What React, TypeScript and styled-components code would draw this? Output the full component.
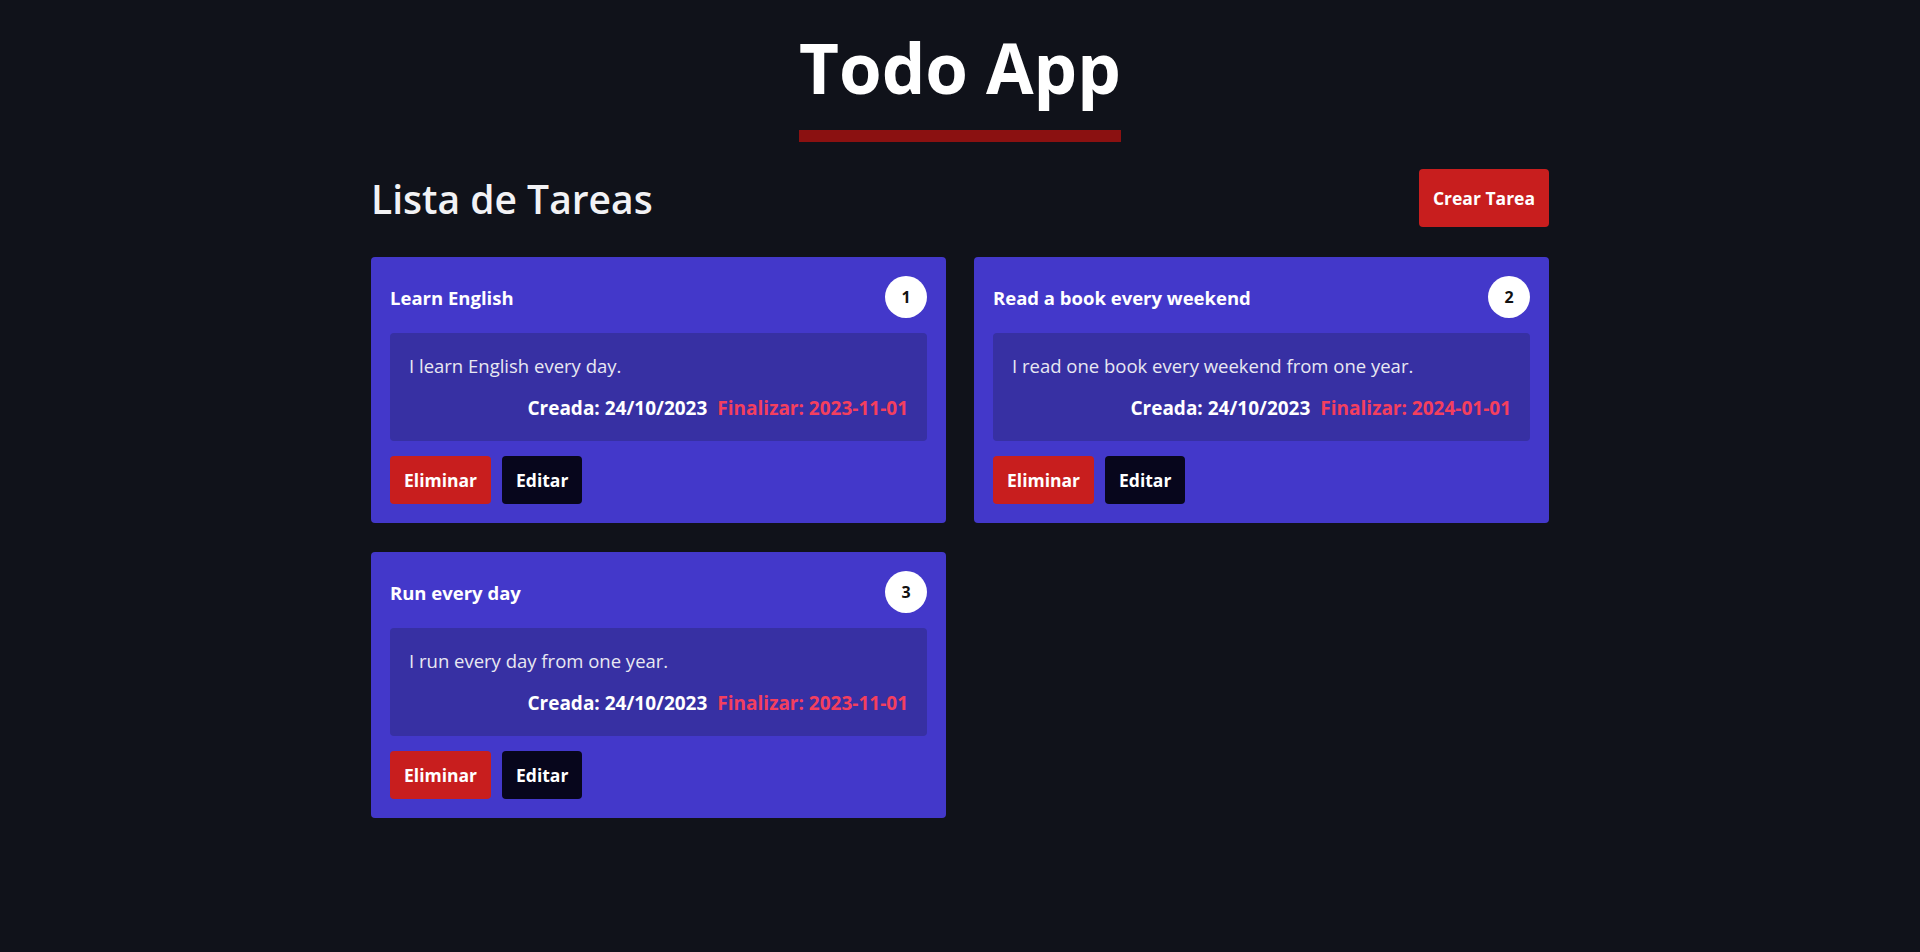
import styled, { createGlobalStyle } from "styled-components";

type Task = {
  id: number;
  title: string;
  description: string;
  created: string;
  due: string;
};

const TASKS: Task[] = [
  {
    id: 1,
    title: "Learn English",
    description: "I learn English every day.",
    created: "24/10/2023",
    due: "2023-11-01",
  },
  {
    id: 2,
    title: "Read a book every weekend",
    description: "I read one book every weekend from one year.",
    created: "24/10/2023",
    due: "2024-01-01",
  },
  {
    id: 3,
    title: "Run every day",
    description: "I run every day from one year.",
    created: "24/10/2023",
    due: "2023-11-01",
  },
];

const GlobalStyle = createGlobalStyle`
  * { box-sizing: border-box; }
  body {
    margin: 0;
    background-color: #10121a;
    font-family: "Open Sans", "Noto Sans", sans-serif;
    color: #ffffff;
  }
`;

const TaskCard = ({ task }: { task: Task }) => (
  <Card>
    <CardHeader>
      <CardTitle>{task.title}</CardTitle>
      <Badge>{task.id}</Badge>
    </CardHeader>
    <CardBody>
      <Description>{task.description}</Description>
      <Dates>
        <span>Creada: {task.created}</span>
        <DueDate>Finalizar: {task.due}</DueDate>
      </Dates>
    </CardBody>
    <Actions>
      <Button $variant="danger">Eliminar</Button>
      <Button $variant="dark">Editar</Button>
    </Actions>
  </Card>
);

export default function App() {
  return (
    <>
      <GlobalStyle />
      <Page>
        <Header>
          <Title>Todo App</Title>
        </Header>
        <Main>
          <Toolbar>
            <Heading>Lista de Tareas</Heading>
            <Button $variant="danger" $large>
              Crear Tarea
            </Button>
          </Toolbar>
          <Grid>
            {TASKS.map((task) => (
              <TaskCard key={task.id} task={task} />
            ))}
          </Grid>
        </Main>
      </Page>
    </>
  );
}

const Page = styled.div`
  min-height: 100vh;
  padding-top: 32px;
`;

const Header = styled.header`
  display: flex;
  justify-content: center;
`;

const Title = styled.h1`
  margin: 0;
  padding-bottom: 28px;
  font-family: "Open Sans", "Noto Sans", sans-serif;
  font-weight: 700;
  font-size: 69px;
  line-height: 70px;
  color: #ffffff;
  border-bottom: 12px solid #8b1111;
`;

const Main = styled.main`
  width: 1178px;
  margin: 27px auto 0;
`;

const Toolbar = styled.div`
  display: flex;
  justify-content: space-between;
  align-items: center;
  margin-bottom: 30px;
`;

const Heading = styled.h2`
  margin: 0;
  font-size: 39px;
  font-weight: 600;
  color: #f2f2f5;
`;

const Grid = styled.div`
  display: grid;
  grid-template-columns: 1fr 1fr;
  gap: 29px 28px;
  align-items: start;
`;

const Card = styled.article`
  display: flex;
  flex-direction: column;
  gap: 15px;
  padding: 19px;
  background-color: #4338ca;
  border-radius: 4px;
`;

const CardHeader = styled.div`
  display: flex;
  justify-content: space-between;
  align-items: center;
`;

const CardTitle = styled.h3`
  margin: 0;
  font-size: 18.5px;
  font-weight: 700;
`;

const Badge = styled.span`
  display: flex;
  align-items: center;
  justify-content: center;
  width: 42px;
  height: 42px;
  border-radius: 50%;
  background-color: #ffffff;
  color: #111111;
  font-size: 16px;
  font-weight: 700;
`;

const CardBody = styled.div`
  padding: 19px;
  background-color: #3730a3;
  border-radius: 4px;
`;

const Description = styled.p`
  margin: 0;
  font-size: 18.5px;
  line-height: 27px;
  color: #e8e8f2;
`;

const Dates = styled.div`
  display: flex;
  justify-content: flex-end;
  gap: 10px;
  margin-top: 16px;
  font-size: 19px;
  font-weight: 700;
  line-height: 27px;
`;

const DueDate = styled.span`
  color: #f43f5e;
`;

const Actions = styled.div`
  display: flex;
  gap: 11px;
`;

const Button = styled.button<{ $variant: "danger" | "dark"; $large?: boolean }>`
  height: ${({ $large }) => ($large ? "58px" : "48px")};
  padding: 0 14px;
  border: none;
  border-radius: 4px;
  font-family: "Open Sans", "Noto Sans", sans-serif;
  font-size: 17.5px;
  font-weight: 700;
  color: #ffffff;
  cursor: pointer;
  background-color: ${({ $variant }) =>
    $variant === "danger" ? "#c81e1e" : "#07061c"};
`;
